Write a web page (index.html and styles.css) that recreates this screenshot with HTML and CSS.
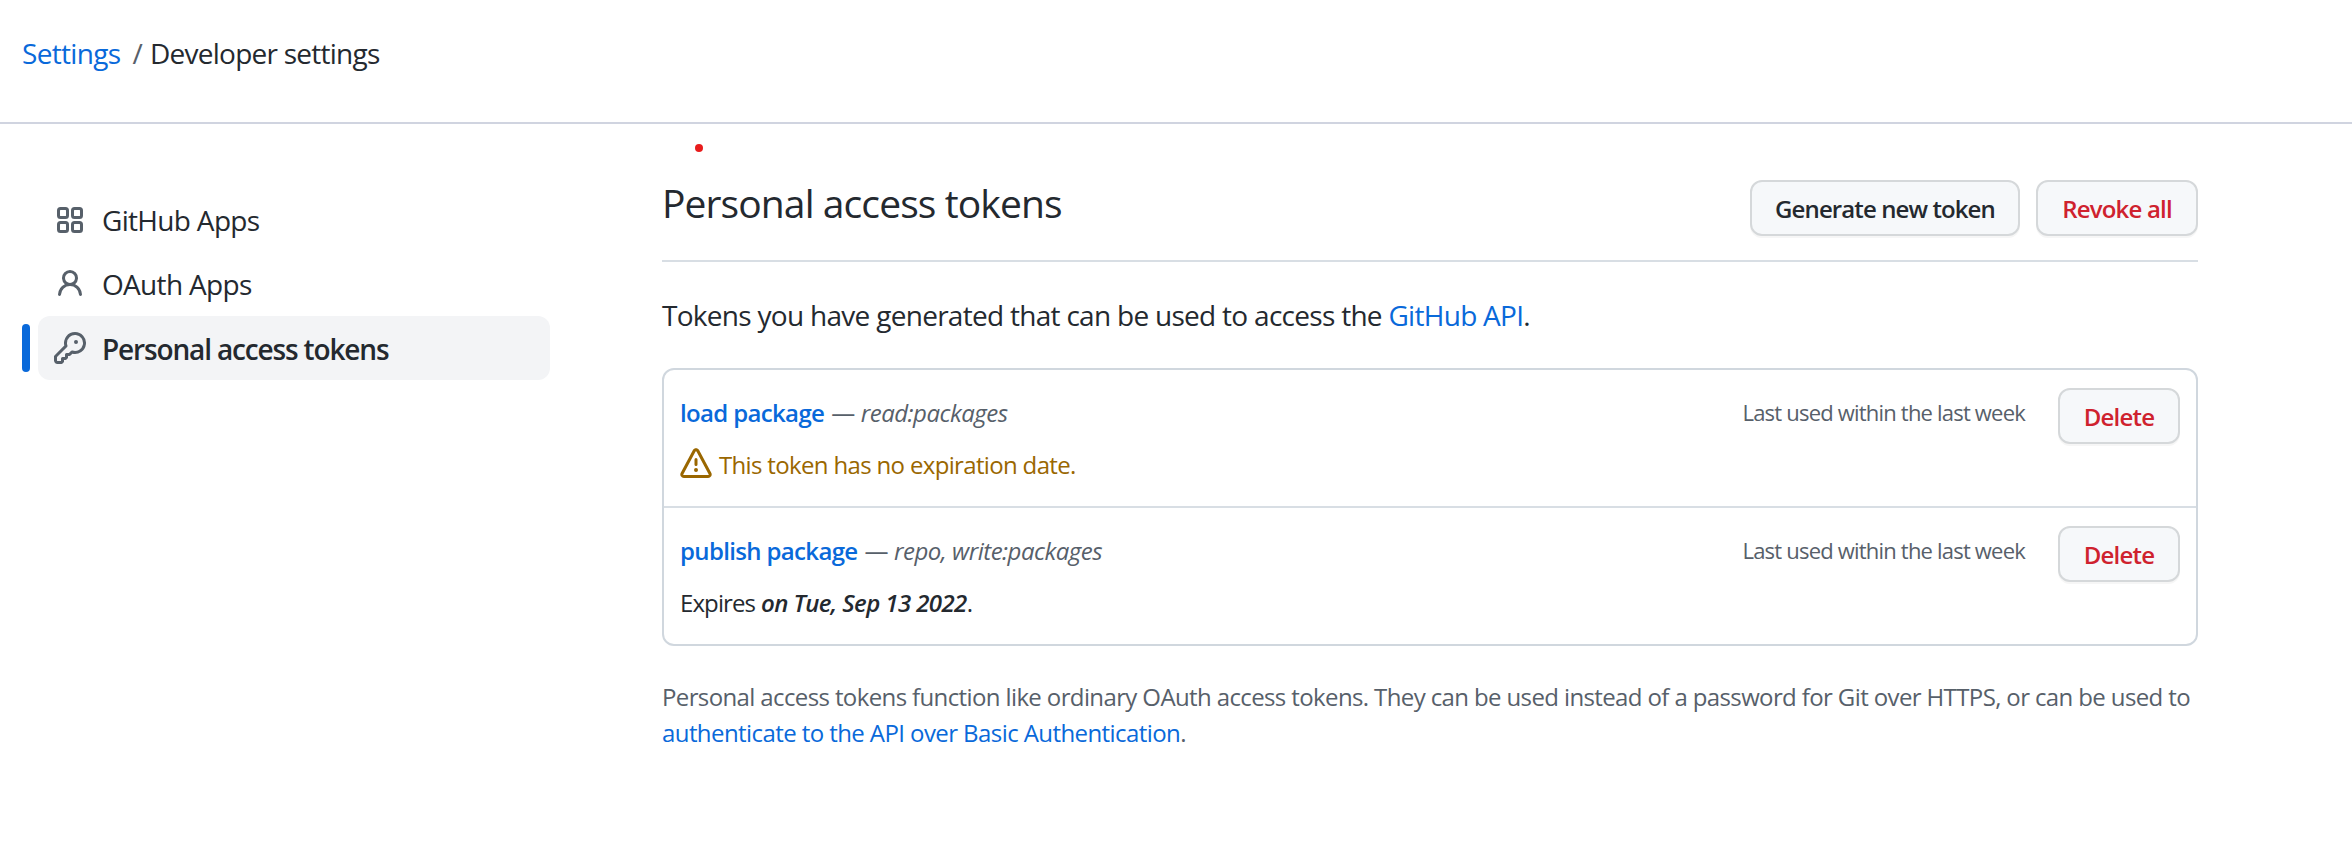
FILE: index.html
```html
<!DOCTYPE html>
<html lang="en">
<head>
<meta charset="utf-8">
<title>Personal access tokens</title>
<link rel="stylesheet" href="styles.css">
</head>
<body>
<header class="topbar">
  <a class="crumb-link" href="#">Settings</a><span class="crumb-sep">/</span><span class="crumb-current">Developer settings</span>
</header>
<div class="layout">
  <nav class="sidenav">
    <a class="nav-item" href="#">
      <svg class="icon" viewBox="0 0 16 16" fill="none" stroke="currentColor" stroke-width="1.5"><rect x="2.25" y="2.25" width="4.5" height="4.5" rx="1"/><rect x="9.25" y="2.25" width="4.5" height="4.5" rx="1"/><rect x="2.25" y="9.25" width="4.5" height="4.5" rx="1"/><rect x="9.25" y="9.25" width="4.5" height="4.5" rx="1"/></svg>
      <span class="nav-text">GitHub Apps</span>
    </a>
    <a class="nav-item" href="#">
      <svg class="icon" viewBox="0 0 16 16" fill="currentColor"><path fill-rule="evenodd" d="M10.5 5a2.5 2.5 0 11-5 0 2.5 2.5 0 015 0zm.061 3.073a4 4 0 10-5.123 0 6.004 6.004 0 00-3.431 5.142.75.75 0 001.498.07 4.5 4.5 0 018.99 0 .75.75 0 101.498-.07 6.005 6.005 0 00-3.432-5.142z"/></svg>
      <span class="nav-text">OAuth Apps</span>
    </a>
    <a class="nav-item selected" href="#">
      <svg class="icon" viewBox="0 0 16 16" fill="currentColor"><path fill-rule="evenodd" d="M6.5 5.5a4 4 0 112.731 3.795.75.75 0 00-.768.18L7.44 10.5H6.25a.75.75 0 00-.75.75v1.19l-.06.06H4.25a.75.75 0 00-.75.75v1.19l-.06.06H1.75a.25.25 0 01-.25-.25v-1.69l5.024-5.023a.75.75 0 00.181-.768A3.995 3.995 0 016.5 5.5zm4-5.5a5.5 5.5 0 00-5.348 6.788L.22 11.72a.75.75 0 00-.22.53v2C0 15.216.784 16 1.75 16h2a.75.75 0 00.53-.22l.5-.5a.75.75 0 00.22-.53V14h.75a.75.75 0 00.53-.22l.5-.5a.75.75 0 00.22-.53V12h.75a.75.75 0 00.53-.22l.932-.932A5.5 5.5 0 1010.5 0zm.5 6a1 1 0 100-2 1 1 0 000 2z"/></svg>
      <span class="nav-text">Personal access tokens</span>
    </a>
  </nav>
  <main class="content">
    <span class="dot"></span>
    <div class="subhead">
      <h1 class="title">Personal access tokens</h1>
      <div class="actions">
        <button class="btn btn-generate">Generate new token</button>
        <button class="btn btn-revoke danger">Revoke all</button>
      </div>
    </div>
    <p class="intro">Tokens you have generated that can be used to access the <a class="link" href="#">GitHub API</a>.</p>
    <div class="card">
      <div class="token">
        <div class="token-main">
          <div class="line"><a class="token-name" href="#">load package</a><span class="dash">—</span><em class="scopes">read:packages</em></div>
          <div class="line warning"><svg class="icon" viewBox="0 0 16 16" fill="currentColor"><path fill-rule="evenodd" d="M8.22 1.754a.25.25 0 00-.44 0L1.698 13.132a.25.25 0 00.22.368h12.164a.25.25 0 00.22-.368L8.22 1.754zm-1.763-.707c.659-1.234 2.427-1.234 3.086 0l6.082 11.378A1.75 1.75 0 0114.082 15H1.918a1.75 1.75 0 01-1.543-2.575L6.457 1.047zM9 11a1 1 0 11-2 0 1 1 0 012 0zm-.25-5.25a.75.75 0 00-1.5 0v2.5a.75.75 0 001.5 0v-2.5z"/></svg><span class="warning-text">This token has no expiration date.</span></div>
        </div>
        <span class="last-used">Last used within the last week</span>
        <button class="btn btn-delete danger">Delete</button>
      </div>
      <div class="token">
        <div class="token-main">
          <div class="line"><a class="token-name" href="#">publish package</a><span class="dash">—</span><em class="scopes">repo, write:packages</em></div>
          <div class="line"><span class="expires">Expires</span><em class="date">on Tue, Sep 13 2022</em><span>.</span></div>
        </div>
        <span class="last-used">Last used within the last week</span>
        <button class="btn btn-delete danger">Delete</button>
      </div>
    </div>
    <p class="note">Personal access tokens function like ordinary OAuth access tokens. They can be used instead of a password for Git over HTTPS, or can be used to <a class="link note-link" href="#">authenticate to the API over Basic Authentication</a>.</p>
  </main>
</div>
</body>
</html>
```
FILE: styles.css
```css
* { box-sizing: border-box; }
body {
  margin: 0;
  background: #fff;
  color: #24292f;
  font-family: "Open Sans", "Noto Sans", sans-serif;
  font-size: 28px;
  letter-spacing: -0.68px;
}
a { text-decoration: none; }
.topbar {
  display: flex;
  height: 124px;
  padding: 32px 22px 0;
  border-bottom: 2px solid #d0d4e0;
  line-height: 42px;
}
.crumb-link, .link { color: #0969da; }
.crumb-sep { margin: 0 8px 0 12px; color: #57606a; }
.crumb-current { letter-spacing: -0.75px; }
.layout { display: flex; padding: 0 154px 0 22px; }
.sidenav { width: 528px; margin-top: 64px; flex: none; }
.nav-item {
  position: relative;
  display: flex;
  align-items: center;
  gap: 16px;
  height: 64px;
  margin-left: 16px;
  padding-left: 16px;
  border-radius: 12px;
  color: #24292f;
}
.icon { width: 32px; height: 32px; flex: none; color: #57606a; }
.selected { background: #f3f4f6; font-weight: 600; letter-spacing: -1.15px; }
.selected .nav-text { padding-top: 1px; }
.selected::before {
  content: "";
  position: absolute;
  left: -16px;
  top: 8px;
  width: 8px;
  height: 48px;
  border-radius: 4px;
  background: #0969da;
}
.content { position: relative; flex: 1; min-width: 0; margin-left: 112px; padding-top: 56px; }
.dot {
  position: absolute;
  left: 33px;
  top: 20px;
  width: 8px;
  height: 8px;
  border-radius: 50%;
  background: #e81c1c;
}
.subhead {
  display: flex;
  justify-content: space-between;
  height: 82px;
  border-bottom: 2px solid #d8dee4;
}
.title { margin: -7px 0 0; font-size: 39px; font-weight: 400; line-height: 60px; letter-spacing: -0.9px; }
.actions { display: flex; gap: 16px; }
.btn {
  height: 56px;
  padding: 2px 0 0;
  border: 2px solid #d5d8da;
  border-radius: 12px;
  background: #f6f8fa;
  box-shadow: 0 2px 0 rgba(27, 31, 36, 0.04);
  color: #24292f;
  font: 600 24px/50px "Open Sans", "Noto Sans", sans-serif;
  letter-spacing: -0.9px;
  white-space: nowrap;
}
.danger { color: #cf222e; }
.btn-generate { width: 270px; }
.btn-revoke { width: 162px; letter-spacing: -0.8px; }
.btn-delete { width: 122px; margin-left: 33px; letter-spacing: -0.8px; }
.intro { margin: 32px 0 0; line-height: 42px; letter-spacing: -0.71px; white-space: nowrap; }
.card {
  margin-top: 32px;
  border: 2px solid #d0d7de;
  border-radius: 12px;
  font-size: 24px;
  letter-spacing: -0.5px;
}
.token { display: flex; height: 136px; padding: 18px 16px 0; }
.token + .token { height: 138px; border-top: 2px solid #d8dee4; }
.token-main { display: flex; flex: 1; flex-direction: column; gap: 16px; padding-top: 7px; }
.line { display: flex; line-height: 36px; white-space: nowrap; }
.token-name { color: #0969da; font-weight: 600; letter-spacing: -0.65px; }
.dash { margin: 0 6px 0 7px; color: #57606a; }
.scopes { color: #57606a; }
.warning, .warning .icon { color: #9a6700; }
.warning .icon { margin: 1px 7px 0 0; }
.warning-text { letter-spacing: -0.66px; }
.expires { letter-spacing: -0.9px; }
.date { margin-left: 6px; font-weight: 600; letter-spacing: -0.6px; }
.last-used { padding-top: 6px; color: #57606a; font-size: 22px; line-height: 36px; letter-spacing: -0.8px; white-space: nowrap; }
.note { margin: 33px 0 0; color: #57606a; font-size: 24px; line-height: 36px; letter-spacing: -0.62px; }
.note-link { letter-spacing: -0.58px; }
```
